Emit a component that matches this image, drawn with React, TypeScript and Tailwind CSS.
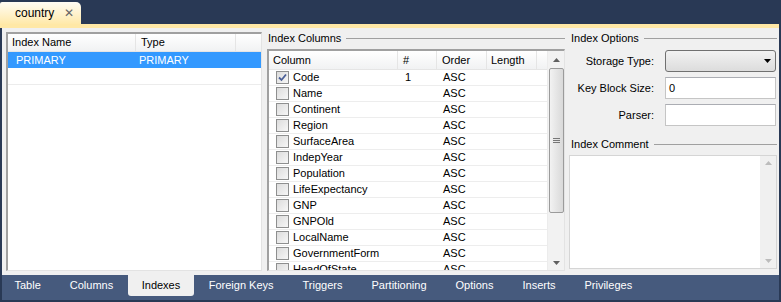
const columns = [
  "Code",
  "Name",
  "Continent",
  "Region",
  "SurfaceArea",
  "IndepYear",
  "Population",
  "LifeExpectancy",
  "GNP",
  "GNPOld",
  "LocalName",
  "GovernmentForm",
  "HeadOfState",
];

const bottomTabs = [
  "Table",
  "Columns",
  "Indexes",
  "Foreign Keys",
  "Triggers",
  "Partitioning",
  "Options",
  "Inserts",
  "Privileges",
];

const Checkbox = ({ checked }: { checked?: boolean }) => (
  <div className="w-[13px] h-[13px] border border-[#8e8f8f] bg-gradient-to-br from-[#dcdcdc] to-[#f7f7f7] flex items-center justify-center">
    {checked && (
      <svg width="9" height="9" viewBox="0 0 9 9">
        <path d="M1 4.5 L3.5 7 L8 1.5" fill="none" stroke="#4a5f97" strokeWidth="1.8" />
      </svg>
    )}
  </div>
);

const GroupTitle = ({ title }: { title: string }) => (
  <div className="flex items-center h-[10px] gap-[5px]">
    <span className="leading-[10px] whitespace-nowrap ml-[2px]">{title}</span>
    <div className="flex-1 border-t border-[#a0a0a0]" />
  </div>
);

const Arrow = ({ up, color = "#606060" }: { up?: boolean; color?: string }) => (
  <svg width="7" height="4" viewBox="0 0 7 4">
    <path d={up ? "M0 4 L3.5 0 L7 4 Z" : "M0 0 L3.5 4 L7 0 Z"} fill={color} />
  </svg>
);

export default function App() {
  return (
    <div
      className="w-[781px] h-[302px] bg-[#293955] flex flex-col text-[11px] text-black overflow-hidden"
      style={{ fontFamily: '"Liberation Sans", Arial, sans-serif' }}
    >
      {/* document tab */}
      <div className="h-[24px] pt-[2px] flex">
        <div className="w-[81px] h-[22px] rounded-tr-[5px] rounded-tl-[2px] bg-gradient-to-b from-[#fffcf4] to-[#ffe9a9] flex items-center pl-[15px]">
          <span className="text-[12px]">country</span>
          <span className="ml-[10px] text-[#666] text-[12px]">✕</span>
        </div>
      </div>
      <div className="h-[4px] bg-[#ffe8a6] mr-[2px]" />

      {/* content */}
      <div className="flex-1 mx-[2px] bg-[#f0f0f0] flex pt-[4px] pl-[4px] pb-[4px] min-h-0">
        {/* index list */}
        <div className="w-[256px] border-l-2 border-t-2 border-[#a0a0a0] border-r border-b border-r-[#e3e3e3] border-b-[#e3e3e3] bg-white flex flex-col">
          <div className="h-[18px] flex bg-gradient-to-b from-white to-[#f1f2f3] border-b border-[#e5e5e5]">
            <div className="w-[128px] pl-[4px] flex items-center border-r border-[#e5e5e5]">Index Name</div>
            <div className="w-[100px] pl-[5px] flex items-center border-r border-[#e5e5e5]">Type</div>
          </div>
          <div className="h-[16px] bg-[#3399ff] text-white flex items-center">
            <div className="w-[128px] pl-[8px]">PRIMARY</div>
            <div className="pl-[3px]">PRIMARY</div>
          </div>
          <div className="h-[17px] border-b border-[#ececec]" />
        </div>

        {/* index columns */}
        <div className="w-[298px] ml-[5px] flex flex-col">
          <div className="h-[17px] pt-[1px]">
            <div className="flex items-center h-[10px] gap-[5px]">
              <span className="leading-[10px] ml-[1px]">Index Columns</span>
              <div className="flex-1 border-t border-[#a0a0a0]" />
            </div>
          </div>
          <div className="flex-1 min-h-0 border-l-2 border-t-2 border-[#a0a0a0] border-r border-b border-r-[#e3e3e3] border-b-[#e3e3e3] bg-white flex overflow-hidden">
            <div className="flex-1 flex flex-col">
              <div className="h-[19px] shrink-0 flex bg-gradient-to-b from-white to-[#f1f2f3] border-b border-[#e5e5e5]">
                <div className="w-[129px] pl-[4px] flex items-center border-r border-[#e5e5e5]">Column</div>
                <div className="w-[39px] pl-[5px] flex items-center border-r border-[#e5e5e5]">#</div>
                <div className="w-[50px] pl-[5px] flex items-center border-r border-[#e5e5e5]">Order</div>
                <div className="w-[50px] pl-[4px] flex items-center border-r border-[#e5e5e5]">Length</div>
              </div>
              {columns.map((c, i) => (
                <div key={c} className="h-[16px] shrink-0 flex items-center border-b border-[#ededed]">
                  <div className="w-[129px] pl-[7px] flex items-center gap-[4px]">
                    <Checkbox checked={i === 0} />
                    <span>{c}</span>
                  </div>
                  <div className="w-[39px] pl-[7px]">{i === 0 ? "1" : ""}</div>
                  <div className="w-[50px] pl-[6px]">ASC</div>
                </div>
              ))}
            </div>
            {/* scrollbar */}
            <div className="w-[17px] bg-[#f2f2f2] flex flex-col items-center border-l border-[#ececec]">
              <div className="h-[17px] flex items-center justify-center">
                <Arrow up />
              </div>
              <div className="w-[15px] h-[145px] rounded-[2px] border border-[#9b9b9b] bg-gradient-to-r from-[#f2f2f2] to-[#d9d9d9] flex items-center justify-center">
                <div className="flex flex-col gap-[1px]">
                  <div className="w-[7px] h-[1px] bg-[#777]" />
                  <div className="w-[7px] h-[1px] bg-[#777]" />
                  <div className="w-[7px] h-[1px] bg-[#777]" />
                </div>
              </div>
              <div className="flex-1" />
              <div className="h-[14px] flex items-center justify-center">
                <Arrow />
              </div>
            </div>
          </div>
        </div>

        {/* index options */}
        <div className="w-[208px] ml-[4px] flex flex-col">
          <div className="h-[17px] pt-[1px]">
            <GroupTitle title="Index Options" />
          </div>
          <div className="flex items-center mt-[1px]">
            <div className="w-[85px] text-right">Storage Type:</div>
            <div className="ml-[11px] w-[111px] h-[22px] rounded-[3px] border border-[#707070] bg-gradient-to-b from-[#f2f2f2] to-[#dcdcdc] flex items-center justify-end pr-[4px]">
              <Arrow color="#000" />
            </div>
          </div>
          <div className="flex items-center mt-[5px]">
            <div className="w-[85px] text-right">Key Block Size:</div>
            <div className="ml-[11px] w-[111px] h-[22px] border border-[#c5c5c5] border-t-[#abadb3] bg-white flex items-center pl-[3px]">0</div>
          </div>
          <div className="flex items-center mt-[5px]">
            <div className="w-[85px] text-right">Parser:</div>
            <div className="ml-[11px] w-[111px] h-[22px] border border-[#c5c5c5] border-t-[#abadb3] bg-white" />
          </div>
          <div className="mt-[13px] h-[16px]">
            <GroupTitle title="Index Comment" />
          </div>
          <div className="flex-1 mb-[2px] border border-[#d5d5d5] bg-white flex">
            <div className="flex-1" />
            <div className="w-[16px] bg-[#f0f0f0] flex flex-col items-center justify-between py-[5px]">
              <Arrow up color="#bcbcbc" />
              <Arrow color="#bcbcbc" />
            </div>
          </div>
        </div>
      </div>

      {/* bottom tabs */}
      <div className="h-[25px] mx-[2px] bg-[#465a7d] flex shrink-0">
        <div className="flex -ml-[2px]">
          {bottomTabs.map((t) =>
            t === "Indexes" ? (
              <div key={t} className="h-[21px] px-[14px] bg-[#f0f0f0] rounded-b-[3px] flex items-center text-black">
                {t}
              </div>
            ) : (
              <div key={t} className="h-[21px] px-[14.5px] flex items-center text-white">
                {t}
              </div>
            )
          )}
        </div>
      </div>
      <div className="h-[2px]" />
    </div>
  );
}
